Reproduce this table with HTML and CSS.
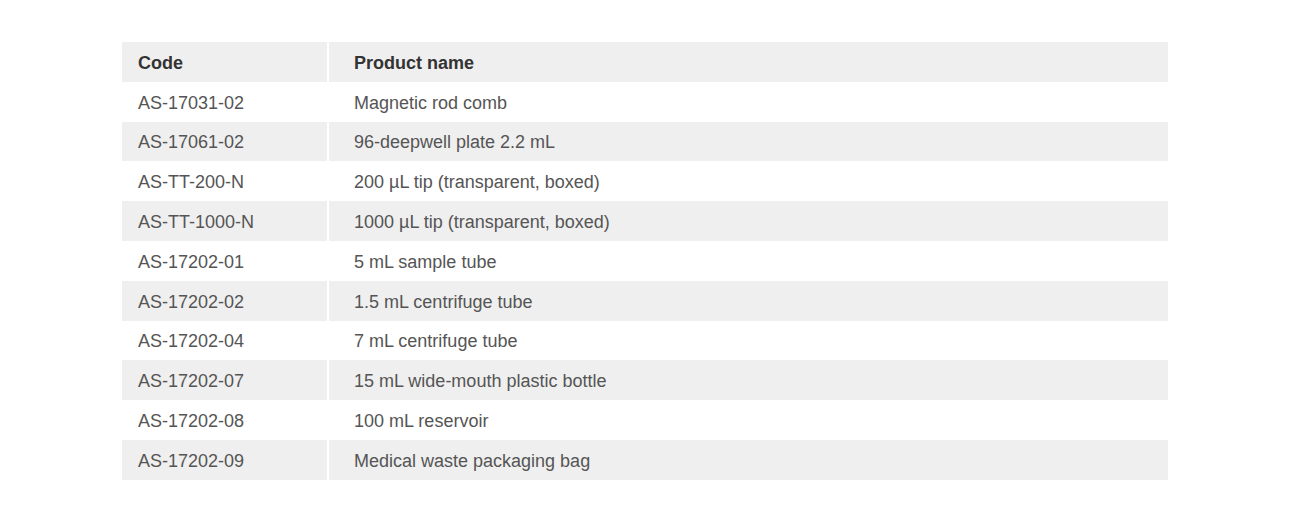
FILE: index.html
```html
<!DOCTYPE html>
<html lang="en">
<head>
<meta charset="utf-8">
<title>Products</title>
<link rel="stylesheet" href="styles.css">
</head>
<body>
<div class="page">
  <table class="product-table">
    <thead>
      <tr><th class="col-code">Code</th><th class="col-name">Product name</th></tr>
    </thead>
    <tbody>
      <tr><td class="col-code">AS-17031-02</td><td class="col-name">Magnetic rod comb</td></tr>
      <tr><td class="col-code">AS-17061-02</td><td class="col-name">96-deepwell plate 2.2 mL</td></tr>
      <tr><td class="col-code">AS-TT-200-N</td><td class="col-name">200 µL tip (transparent, boxed)</td></tr>
      <tr><td class="col-code">AS-TT-1000-N</td><td class="col-name">1000 µL tip (transparent, boxed)</td></tr>
      <tr><td class="col-code">AS-17202-01</td><td class="col-name">5 mL sample tube</td></tr>
      <tr><td class="col-code">AS-17202-02</td><td class="col-name">1.5 mL centrifuge tube</td></tr>
      <tr><td class="col-code">AS-17202-04</td><td class="col-name">7 mL centrifuge tube</td></tr>
      <tr><td class="col-code">AS-17202-07</td><td class="col-name">15 mL wide-mouth plastic bottle</td></tr>
      <tr><td class="col-code">AS-17202-08</td><td class="col-name">100 mL reservoir</td></tr>
      <tr><td class="col-code">AS-17202-09</td><td class="col-name">Medical waste packaging bag</td></tr>
    </tbody>
  </table>
</div>
</body>
</html>
```
FILE: styles.css
```css
html, body {
  margin: 0;
  padding: 0;
  background: #ffffff;
}
.page {
  padding: 42px 122px 0;
  font-family: "Liberation Sans", Arial, sans-serif;
}
.product-table {
  width: 100%;
  border-collapse: collapse;
  border-spacing: 0;
  font-size: 18px;
  color: #555555;
}
.product-table th,
.product-table td {
  height: 39.8px;
  padding: 3px 0 0;
  text-align: left;
  vertical-align: middle;
  box-sizing: border-box;
}
.product-table th {
  font-weight: bold;
  color: #333333;
}
.product-table thead tr,
.product-table tbody tr:nth-child(even) {
  background: #efefef;
}
.col-code {
  width: 206px;
  padding-left: 16px !important;
}
.col-name {
  border-left: 2px solid #ffffff;
  padding-left: 25px !important;
}
```
